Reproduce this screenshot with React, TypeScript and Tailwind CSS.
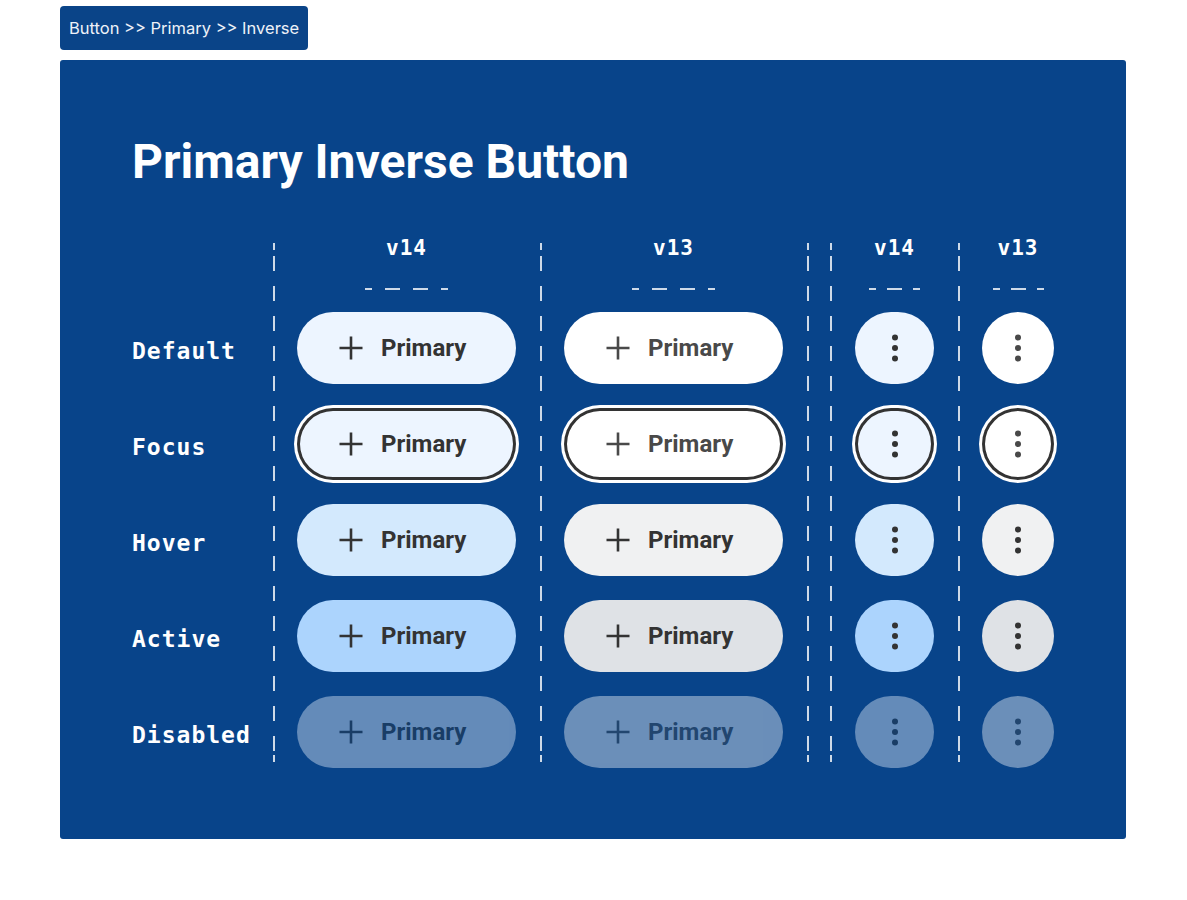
type State = 'Default' | 'Focus' | 'Hover' | 'Active' | 'Disabled'

const states: State[] = ['Default', 'Focus', 'Hover', 'Active', 'Disabled']

const v14: Record<State, string> = {
  Default: 'bg-[#edf5ff] text-[#333333]',
  Focus: 'bg-[#edf5ff] text-[#333333] shadow-[inset_0_0_0_3px_#333333,0_0_0_3px_#ffffff]',
  Hover: 'bg-[#d3e9fd] text-[#333333]',
  Active: 'bg-[#acd4fd] text-[#333333]',
  Disabled: 'bg-[#edf5ff] text-[#333333] opacity-40',
}

const v13: Record<State, string> = {
  Default: 'bg-white text-[#494949]',
  Focus: 'bg-white text-[#494949] shadow-[inset_0_0_0_3px_#333333,0_0_0_3px_#ffffff]',
  Hover: 'bg-[#f0f1f2] text-[#333333]',
  Active: 'bg-[#dfe2e6] text-[#333333]',
  Disabled: 'bg-white text-[#494949] opacity-40',
}

const mono = 'font-["DejaVu_Sans_Mono","Liberation_Mono",monospace] font-bold text-white'

function Plus() {
  return (
    <svg width="24" height="24" viewBox="0 0 24 24" fill="none" stroke="currentColor" strokeWidth="2.6">
      <path d="M12 0.5V23.5M0.5 12H23.5" />
    </svg>
  )
}

function Dots() {
  return (
    <svg width="8" height="30" viewBox="0 0 8 30" fill="currentColor">
      <circle cx="4" cy="4.5" r="3" />
      <circle cx="4" cy="15" r="3" />
      <circle cx="4" cy="25.5" r="3" />
    </svg>
  )
}

function VLine() {
  return (
    <div className="mt-[13px] h-[519px] w-[2px] shrink-0 [background:linear-gradient(#ffffffcc,#ffffffcc)_top/100%_7px_no-repeat,linear-gradient(#ffffffcc,#ffffffcc)_bottom/100%_7px_no-repeat,repeating-linear-gradient(to_bottom,transparent_0_13px,#ffffffcc_13px_28px,transparent_28px_30px)]" />
  )
}

function Header({ label, wide }: { label: string; wide?: boolean }) {
  const dashes = wide ? [7, 15, 15, 7] : [7, 15, 7]
  return (
    <div className="h-[70px] pt-[4px] flex flex-col items-center">
      <div className={`${mono} text-[21px] leading-[28px] tracking-[1px]`}>{label}</div>
      <div className={`mt-[26px] flex ${wide ? 'gap-[13px]' : 'gap-[11px]'}`}>
        {dashes.map((w, i) => (
          <div key={i} className="h-[2px] bg-white/80" style={{ width: w }} />
        ))}
      </div>
    </div>
  )
}

function TextColumn({ label, styles }: { label: string; styles: Record<State, string> }) {
  return (
    <div className="w-[265px] pl-[22px] pr-[24px] shrink-0">
      <Header label={label} wide />
      {states.map((s) => (
        <div key={s} className="h-[96px] flex items-center">
          <button
            className={`h-[72px] w-[219px] rounded-full flex items-center gap-[18px] pl-[42px] font-['Roboto',sans-serif] text-[24px] font-bold ${styles[s]}`}
          >
            <Plus />
            <span>Primary</span>
          </button>
        </div>
      ))}
    </div>
  )
}

function IconColumn({ label, styles, size }: { label: string; styles: Record<State, string>; size: string }) {
  return (
    <div className={`shrink-0 pr-[24px] ${size === 'wide' ? 'pl-[23px]' : 'pl-[22px]'}`}>
      <Header label={label} />
      {states.map((s) => (
        <div key={s} className="h-[96px] flex items-center">
          <button
            className={`h-[72px] rounded-full flex items-center justify-center ${size === 'wide' ? 'w-[79px]' : 'w-[72px]'} ${styles[s]}`}
          >
            <Dots />
          </button>
        </div>
      ))}
    </div>
  )
}

export default function App() {
  return (
    <div className="px-[60px] pt-[6px] font-['Inter',sans-serif]">
      <div className="inline-block h-[44px] px-[9px] leading-[44px] rounded-[4px] bg-[#0a4488] text-[16.5px] text-[#eef2f8]">
        Button &gt;&gt; Primary &gt;&gt; Inverse
      </div>

      <div className="mt-[10px] w-[1066px] h-[779px] rounded-[3px] bg-[#08448a] pl-[72px] pt-[74px]">
        <h1 className="font-['Roboto',sans-serif] text-[48px] leading-[56px] font-bold text-white">
          Primary Inverse Button
        </h1>

        <div className="mt-[40px] flex items-start">
          <div className="w-[141px] shrink-0">
            <div className="h-[70px]" />
            {states.map((s) => (
              <div key={s} className={`h-[96px] flex items-center pt-[6px] ${mono} text-[23px] tracking-[1px]`}>
                {s}
              </div>
            ))}
          </div>
          <VLine />
          <TextColumn label="v14" styles={v14} />
          <VLine />
          <TextColumn label="v13" styles={v13} />
          <VLine />
          <div className="w-[21px] shrink-0" />
          <VLine />
          <IconColumn label="v14" styles={v14} size="wide" />
          <VLine />
          <IconColumn label="v13" styles={v13} size="narrow" />
        </div>
      </div>
    </div>
  )
}
